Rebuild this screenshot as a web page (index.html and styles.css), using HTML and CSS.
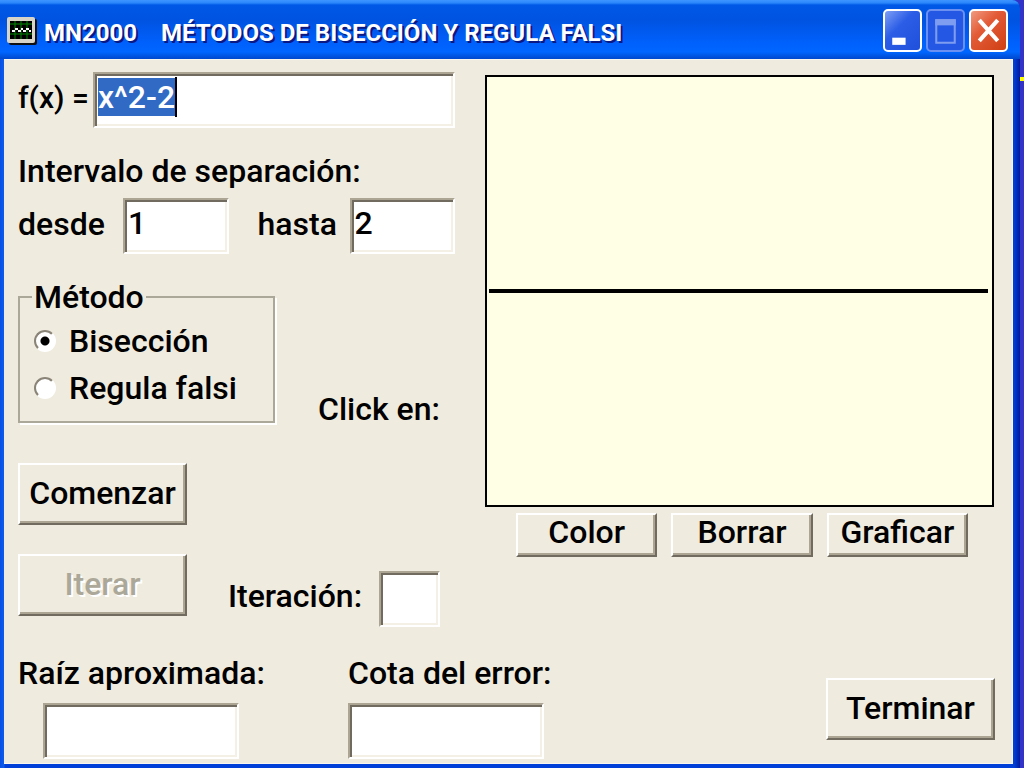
FILE: index.html
```html
<!DOCTYPE html>
<html lang="es">
<head>
    <meta charset="UTF-8">
    <meta name="viewport" content="width=device-width, initial-scale=1.0">
    <title>MN2000 - Métodos de bisección y regula falsi</title>
    <link rel="stylesheet" href="styles.css">
</head>
<body>
    <div class="window">
        <header class="titlebar">
            <svg class="app-icon" viewBox="0 0 30 28" width="30" height="28">
                <rect x="2" y="2" width="28" height="26" rx="2" fill="#101010"/>
                <rect x="0" y="0" width="28" height="26" rx="2" fill="#d8d4c8"/>
                <rect x="3" y="4" width="22" height="18" fill="#000"/>
                <path d="M3 7h22M3 17h22M8 4v18M14 4v18M20 4v18" stroke="#008a00" stroke-width="1" fill="none"/>
                <path d="M5 14h3M8 12h3M11 14h3M14 12h2M16 14h3M19 12h3M22 14h2" stroke="#fff" stroke-width="2" fill="none"/>
            </svg>
            <h1><span>MN2000</span> <span>MÉTODOS DE BISECCIÓN Y REGULA FALSI</span></h1>
            <div class="window-buttons">
                <button type="button" class="win-btn" aria-label="Minimizar">
                    <svg viewBox="0 0 34 38"><rect x="7" y="26" width="13" height="7" fill="#fff"/></svg>
                </button>
                <button type="button" class="win-btn win-max" aria-label="Maximizar" disabled>
                    <svg viewBox="0 0 34 38"><path d="M8 9h18v22H8z" fill="none" stroke="#7f9df0" stroke-width="2"/><path d="M7 8h20v6H7z" fill="#7f9df0"/></svg>
                </button>
                <button type="button" class="win-btn win-close" aria-label="Cerrar">
                    <svg viewBox="0 0 34 38"><path d="M8 9l18 20M26 9L8 29" stroke="#fff" stroke-width="4" fill="none"/></svg>
                </button>
            </div>
        </header>

        <form class="client">
            <div class="main">
                <div class="controls">
                    <div class="row">
                        <label for="fx" class="fx-label">f(x) =</label>
                        <div class="fx-field">
                            <input type="text" id="fx" value="x^2-2">
                            <span class="caret"></span>
                        </div>
                    </div>

                    <p class="heading">Intervalo de separación:</p>
                    <div class="row">
                        <label for="desde" class="desde-label">desde</label>
                        <input type="text" id="desde" class="bound" value="1">
                        <label for="hasta" class="hasta-label">hasta</label>
                        <input type="text" id="hasta" class="bound" value="2">
                    </div>

                    <div class="method-row">
                        <fieldset>
                            <legend>Método</legend>
                            <label class="option"><input type="radio" name="metodo" checked> Bisección</label>
                            <label class="option"><input type="radio" name="metodo"> Regula falsi</label>
                        </fieldset>
                        <p>Click en:</p>
                    </div>

                    <button type="button" class="btn">Comenzar</button>
                    <div class="row iter-row">
                        <button type="button" class="btn" disabled>Iterar</button>
                        <label for="iter">Iteración:</label>
                        <input type="text" id="iter">
                    </div>
                </div>

                <div class="graph">
                    <div class="plot"><div class="axis"></div></div>
                    <div class="graph-buttons">
                        <button type="button" class="btn">Color</button>
                        <button type="button" class="btn">Borrar</button>
                        <button type="button" class="btn">Graficar</button>
                    </div>
                </div>
            </div>

            <div class="results">
                <div class="result raiz">
                    <label for="raiz">Raíz aproximada:</label>
                    <input type="text" id="raiz">
                </div>
                <div class="result">
                    <label for="cota">Cota del error:</label>
                    <input type="text" id="cota">
                </div>
                <button type="button" class="btn exit">Terminar</button>
            </div>
        </form>
    </div>

    <script>
        const fx = document.getElementById('fx');
        fx.focus();
        fx.select();
    </script>
</body>
</html>
```
FILE: styles.css
```css
* {
    box-sizing: border-box;
}
body {
    margin: 0;
    padding-right: 4px;
    min-height: 100vh;
    background: linear-gradient(#3333c8 77px, #ffff00 77px, #ffff00 81px, #3333c8 81px);
    font-family: Roboto, sans-serif;
    font-size: 32px;
    font-weight: 500;
    line-height: 40px;
    color: #000;
}
.window {
    min-height: 100vh;
    display: flex;
    flex-direction: column;
    border-radius: 0 8px 0 0;
    background: linear-gradient(90deg, #0a4fe0, #0a5cf0 4px, #0040d8 5px, #0040d8 calc(100% - 6px), #001a9c);
    padding: 0 7px 4px 4px;
}
.titlebar {
    display: flex;
    align-items: center;
    height: 59px;
    margin: 0 -7px 0 -4px;
    padding: 2px 12px 0 7px;
    border-radius: 0 8px 0 0;
    background: linear-gradient(#3d95ff, #2a86fb 3px, #0058e6 5px, #0053e1 20px, #0060fb 42px, #0066ff 52px, #0048cc 59px);
}
.app-icon {
    flex: none;
    margin-right: 7px;
}
h1 {
    flex: 1;
    display: flex;
    gap: 24px;
    margin: 0;
    padding-top: 4px;
    color: #fff;
    font-size: 24px;
    font-weight: 700;
    white-space: nowrap;
    text-shadow: 2px 2px #0a1883;
}
.window-buttons {
    display: flex;
    gap: 4px;
}
.win-btn {
    width: 39px;
    height: 43px;
    padding: 0;
    border: 2px solid #fff;
    border-radius: 5px;
    background: linear-gradient(135deg, #7f9ff5, #2b5de6 40%, #1f50dc);
}
.win-btn svg {
    display: block;
    width: 100%;
    height: 100%;
}
.win-max {
    border-color: #6b90f2;
    background: #2458e4;
}
.win-close {
    background: linear-gradient(135deg, #f09a80, #e25a36 40%, #cf3f14);
}
.client {
    flex: 1;
    padding: 12px 17px 4px 14px;
    border: 1px solid #f8f6ee;
    border-width: 1px 1px 1px 0;
    background: #efebde;
}
.main {
    display: flex;
    gap: 30px;
}
.controls {
    flex: none;
    width: 437px;
}
.row {
    display: flex;
    align-items: center;
}
p {
    margin: 0;
    white-space: nowrap;
}
input[type="text"] {
    width: 100%;
    min-width: 0;
    height: 56px;
    padding: 0 2px 6px 3px;
    border: 2px solid;
    border-color: #aca593 #fff #fff #aca593;
    border-radius: 0;
    box-shadow: inset 2px 2px #716b5f, inset -2px -2px #f4f0e6;
    background: #fff;
    font: inherit;
    color: #000;
    outline: none;
}
input::selection {
    background: #316ac5;
    color: #fff;
}
.fx-label {
    flex: none;
    width: 75px;
    padding-bottom: 4px;
    font-size: 30px;
    white-space: nowrap;
}
.fx-field {
    flex: 1;
    display: flex;
    position: relative;
}
.caret {
    position: absolute;
    left: 82px;
    top: 5px;
    width: 2px;
    height: 40px;
    background: #000;
}
.heading {
    margin: 23px 0 7px;
}
.desde-label {
    width: 105px;
    padding-bottom: 4px;
}
.hasta-label {
    width: 92px;
    margin-left: 29px;
    padding-bottom: 4px;
}
input.bound {
    flex: 1;
}
.method-row {
    display: flex;
    gap: 43px;
    margin-top: 23px;
}
.method-row p {
    align-self: flex-end;
    margin-bottom: -6px;
}
fieldset {
    flex: none;
    width: 257px;
    height: 146px;
    margin: 0;
    padding: 0 14px;
    border: 2px solid #aca899;
    box-shadow: 2px 2px #fff;
}
legend {
    padding: 0 2px;
    margin-left: -2px;
}
.option {
    display: flex;
    align-items: center;
    gap: 13px;
    height: 47px;
}
input[type="radio"] {
    appearance: none;
    flex: none;
    width: 22px;
    height: 22px;
    margin: 0;
    border: 2px solid;
    border-color: #8a8478 #fff #fff #8a8478;
    border-radius: 50%;
    background: #fff;
}
input[type="radio"]:checked {
    background: radial-gradient(circle, #000 4px, #fff 5px);
}
.btn {
    width: 169px;
    height: 62px;
    padding: 0 0 3px;
    border: 2px solid;
    border-color: #fff #716b5f #716b5f #fff;
    border-radius: 0;
    box-shadow: inset -2px -2px #aca593;
    background: #efebde;
    font: inherit;
    color: #000;
}
.btn:disabled {
    color: #aca899;
    text-shadow: 2px 2px #fff;
}
.controls > .btn {
    display: block;
    margin-top: 40px;
}
.iter-row {
    align-items: flex-start;
    margin-top: 29px;
}
.iter-row label {
    flex: none;
    width: 151px;
    margin-left: 41px;
    padding-top: 22px;
}
.iter-row input[type="text"] {
    width: 61px;
    margin-top: 17px;
}
.graph {
    flex: 1;
    min-width: 0;
    padding: 3px 1px 0 0;
}
.plot {
    display: flex;
    align-items: center;
    height: 432px;
    padding: 0 4px 0 2px;
    border: 2px solid #000;
    background: #ffffe6;
}
.axis {
    flex: 1;
    height: 4px;
    background: #000;
}
.graph-buttons {
    display: flex;
    gap: 14px;
    padding: 6px 26px 0 31px;
}
.graph-buttons .btn {
    flex: 1;
    min-width: 0;
    height: 44px;
    padding-bottom: 6px;
    line-height: 32px;
}
.results {
    display: flex;
    align-items: flex-start;
    margin-top: 26px;
}
.result {
    width: 205px;
    white-space: nowrap;
}
.result label {
    display: block;
    margin-bottom: 10px;
}
.result input[type="text"] {
    width: 196px;
}
.raiz {
    width: 330px;
}
.raiz input[type="text"] {
    margin-left: 25px;
}
.exit {
    margin: 25px 0 0 auto;
}
```
